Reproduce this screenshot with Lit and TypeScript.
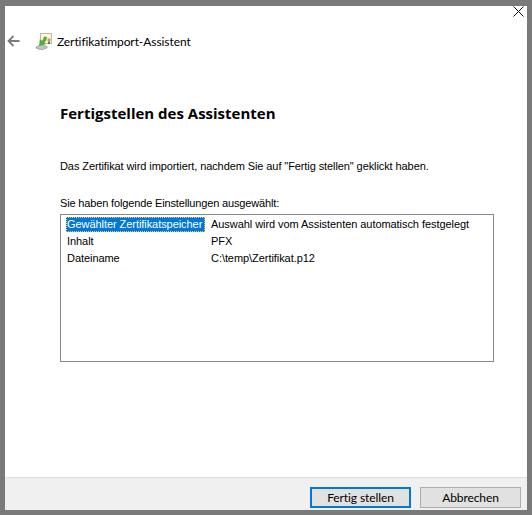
import { LitElement, html, css } from "lit";
import { customElement } from "lit/decorators.js";

@customElement("app-root")
export class AppRoot extends LitElement {
  static styles = css`
    :host {
      display: block;
      width: 532px;
      height: 515px;
      box-sizing: border-box;
      padding: 6px 5px 5px 5px;
      background: #7a7a7a;
      font-family: "Liberation Sans", Arial, sans-serif;
      font-size: 11px;
      color: #000;
      overflow: hidden;
    }
    .win {
      position: relative;
      height: 504px;
      background: #fff;
      display: flex;
      flex-direction: column;
    }
    .close {
      position: absolute;
      top: 0;
      right: 3px;
      width: 11px;
      height: 11px;
    }
    .head {
      display: flex;
      align-items: center;
      height: 16px;
      margin-top: 27px;
      padding-left: 2px;
      font-family: Lato, sans-serif;
      font-size: 12px;
      letter-spacing: -0.08px;
    }
    .back { width: 13px; height: 12px; margin-right: 15px; }
    .cert { width: 18px; height: 18px; margin-right: 4px; }
    .main { flex: 1; padding: 0 33px 0 55px; }
    h1 {
      margin: 54px 0 0;
      font-family: "Open Sans", sans-serif;
      font-size: 15px;
      line-height: 20px;
      font-weight: 700;
    }
    .p { margin: 35px 0 0 0; line-height: 16px; letter-spacing: -0.09px; }
    .p2 { margin: 21px 0 0 0; line-height: 16px; letter-spacing: -0.15px; }
    .list {
      margin-top: 3px;
      width: 434px;
      height: 148px;
      box-sizing: border-box;
      border: 1px solid #828790;
      padding: 2px 0 0 5px;
      display: grid;
      grid-template-columns: 139px 1fr;
      grid-auto-rows: 17px;
      column-gap: 6px;
      align-content: start;
      line-height: 15px;
      letter-spacing: -0.06px;
    }
    .sel {
      background: #0078d7;
      color: #fff;
      height: 15px;
      outline: 1px dotted #ffc83d;
      outline-offset: -1px;
      padding-left: 1px;
      white-space: nowrap;
    }
    .k { padding-left: 1px; }
    .foot {
      height: 33px;
      box-sizing: border-box;
      background: #f0f0f0;
      border-top: 1px solid #dfdfdf;
      display: flex;
      justify-content: flex-end;
      gap: 9px;
      padding: 9px 6px 0 0;
    }
    button {
      width: 101px;
      height: 21px;
      box-sizing: border-box;
      background: #e1e1e1;
      border: 1px solid #adadad;
      font-family: Lato, sans-serif;
      font-size: 12px;
      letter-spacing: -0.1px;
      color: #000;
      padding: 0;
    }
    button.def { border: 2px solid #0078d7; }
  `;

  render() {
    return html`
      <div class="win">
        <svg class="close" viewBox="0 0 11 11" fill="none" stroke="#111" stroke-width="1">
          <path d="M.5.5l10 10M10.500.5l-10 10" />
        </svg>
        <div class="head">
          <svg class="back" viewBox="0 0 13 12" fill="none" stroke="#7c7c7c" stroke-width="1.8">
            <path d="M12.500 6H1.500M6.500 1L1.500 6l5 5" />
          </svg>
          <svg class="cert" viewBox="0 0 18 18">
            <rect x="5.500" y="1.500" width="11" height="10" fill="#fbf6e6" stroke="#c3b89c" />
            <rect x="12.500" y="6.500" width="3" height="3" fill="#e9982a" />
            <rect x="13" y="9.500" width="2" height="2.500" fill="#3b78c4" />
            <path d="M1 15l5-2.500 6 2v1.500l-6 2-5-2z" fill="#c3c5c1" stroke="#85887f" stroke-width=".6" />
            <path d="M9 5h2.500c0 3-1 4.500-2.500 5.500l1.500 1.500-6 1.500 .5-6 1.500 1.500c1.500-1 2.500-2 2.500-4z" fill="#55b033" stroke="#338a22" stroke-width=".4" />
          </svg>
          <span>Zertifikatimport-Assistent</span>
        </div>
        <div class="main">
          <h1>Fertigstellen des Assistenten</h1>
          <p class="p">Das Zertifikat wird importiert, nachdem Sie auf "Fertig stellen" geklickt haben.</p>
          <p class="p2">Sie haben folgende Einstellungen ausgewählt:</p>
          <div class="list">
            <div class="sel">Gewählter Zertifikatspeicher</div><div>Auswahl wird vom Assistenten automatisch festgelegt</div>
            <div class="k">Inhalt</div><div>PFX</div>
            <div class="k">Dateiname</div><div>C:\\temp\\Zertifikat.p12</div>
          </div>
        </div>
        <div class="foot">
          <button class="def">Fertig stellen</button>
          <button>Abbrechen</button>
        </div>
      </div>
    `;
  }
}
